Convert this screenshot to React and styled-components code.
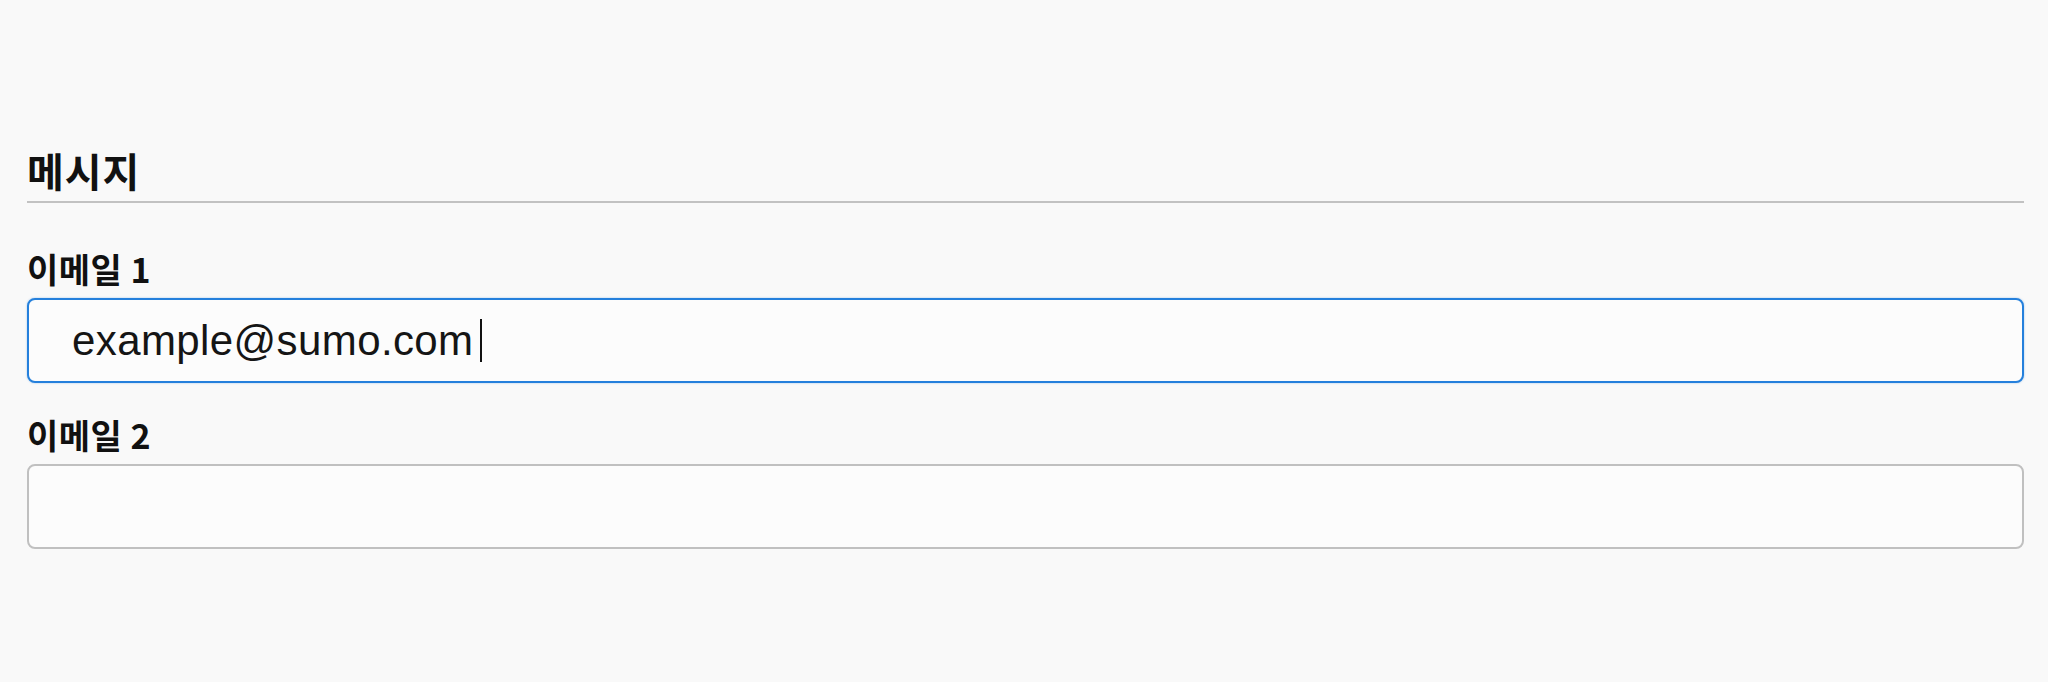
import React from "react";
import styled, { createGlobalStyle } from "styled-components";

const GlobalStyle = createGlobalStyle`
  html, body {
    margin: 0;
    padding: 0;
    background: #f9f9f9;
  }
  body {
    font-family: "Noto Sans CJK KR", "Noto Sans", sans-serif;
    color: #111;
  }
`;

const Page = styled.div`
  padding: 146px 24px 0 27px;
  min-height: 682px;
  box-sizing: border-box;
`;

const Section = styled.section`
  display: flex;
  flex-direction: column;
`;

const Heading = styled.h2`
  margin: 0;
  font-family: "Noto Sans CJK KR", sans-serif;
  font-size: 40px;
  line-height: 48px;
  font-weight: 700;
  letter-spacing: 1px;
  padding-bottom: 7px;
  border-bottom: 2px solid #c2c2c2;
`;

const Fields = styled.div`
  display: flex;
  flex-direction: column;
  gap: 32px;
  margin-top: 46px;
`;

const Field = styled.div`
  display: flex;
  flex-direction: column;
  gap: 9px;
`;

const Label = styled.label`
  font-family: "Noto Sans CJK KR", sans-serif;
  font-size: 34px;
  line-height: 40px;
  font-weight: 600;
  letter-spacing: 0.5px;
  color: #111;
`;

const InputBox = styled.div`
  box-sizing: border-box;
  height: 85px;
  display: flex;
  align-items: center;
  padding: 0 0 0 43px;
  border-radius: 8px;
  background: #fcfcfc;
  border: 2px solid ${(p) => (p.$focused ? "#2580dc" : "#c0c0c0")};
  box-shadow: ${(p) => (p.$focused ? "0 0 2px rgba(37,128,220,0.45)" : "none")};
`;

const Value = styled.span`
  font-family: "Liberation Sans", Arial, sans-serif;
  font-size: 42px;
  line-height: 47px;
  letter-spacing: 0.4px;
  color: #151515;
`;

const Caret = styled.span`
  display: inline-block;
  width: 2px;
  height: 43px;
  margin-left: 6px;
  background: #111;
`;

export default function App() {
  return (
    <>
      <GlobalStyle />
      <Page>
        <Section>
          <Heading>메시지</Heading>
          <Fields>
            <Field>
              <Label>이메일 1</Label>
              <InputBox $focused>
                <Value>example@sumo.com</Value>
                <Caret />
              </InputBox>
            </Field>
            <Field>
              <Label>이메일 2</Label>
              <InputBox />
            </Field>
          </Fields>
        </Section>
      </Page>
    </>
  );
}
